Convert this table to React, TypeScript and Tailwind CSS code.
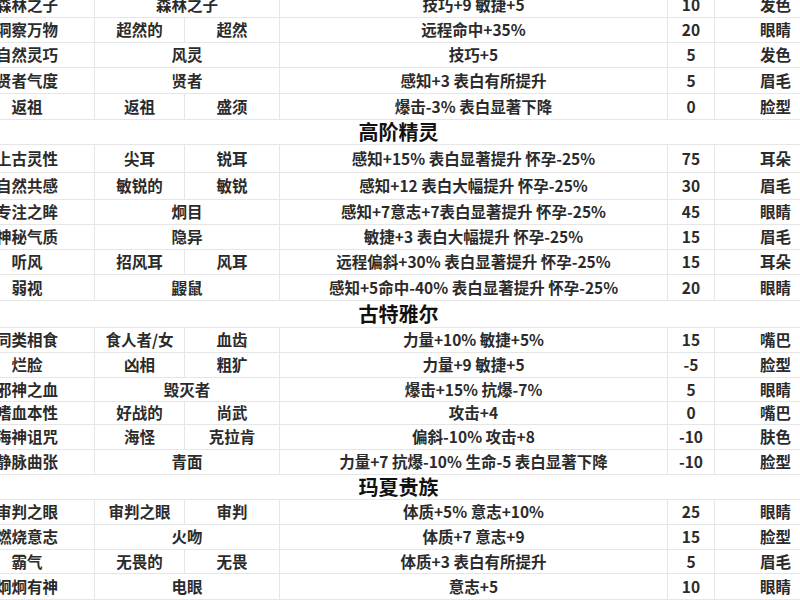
import React from 'react';

type Row =
  | { kind: 'header'; title: string; h: string }
  | { kind: 'data'; name: string; a: string; b?: string; effect: string; cost: string; part: string; h: string };

const rows: Row[] = [
  { kind: 'data', name: '森林之子', a: '森林之子', effect: '技巧+9 敏捷+5', cost: '10', part: '发色', h: 'h-[26px]' },
  { kind: 'data', name: '洞察万物', a: '超然的', b: '超然', effect: '远程命中+35%', cost: '20', part: '眼睛', h: 'h-[25px]' },
  { kind: 'data', name: '自然灵巧', a: '风灵', effect: '技巧+5', cost: '5', part: '发色', h: 'h-[25px]' },
  { kind: 'data', name: '贤者气度', a: '贤者', effect: '感知+3 表白有所提升', cost: '5', part: '眉毛', h: 'h-[26px]' },
  { kind: 'data', name: '返祖', a: '返祖', b: '盛须', effect: '爆击-3% 表白显著下降', cost: '0', part: '脸型', h: 'h-[26px]' },
  { kind: 'header', title: '高阶精灵', h: 'h-[25px]' },
  { kind: 'data', name: '上古灵性', a: '尖耳', b: '锐耳', effect: '感知+15% 表白显著提升 怀孕-25%', cost: '75', part: '耳朵', h: 'h-[28px]' },
  { kind: 'data', name: '自然共感', a: '敏锐的', b: '敏锐', effect: '感知+12 表白大幅提升 怀孕-25%', cost: '30', part: '眉毛', h: 'h-[27px]' },
  { kind: 'data', name: '专注之眸', a: '炯目', effect: '感知+7意志+7表白显著提升 怀孕-25%', cost: '45', part: '眼睛', h: 'h-[25px]' },
  { kind: 'data', name: '神秘气质', a: '隐异', effect: '敏捷+3 表白大幅提升 怀孕-25%', cost: '15', part: '眉毛', h: 'h-[25px]' },
  { kind: 'data', name: '听风', a: '招风耳', b: '风耳', effect: '远程偏斜+30% 表白显著提升 怀孕-25%', cost: '15', part: '耳朵', h: 'h-[25px]' },
  { kind: 'data', name: '弱视', a: '鼹鼠', effect: '感知+5命中-40% 表白显著提升 怀孕-25%', cost: '20', part: '眼睛', h: 'h-[26px]' },
  { kind: 'header', title: '古特雅尔', h: 'h-[27px]' },
  { kind: 'data', name: '同类相食', a: '食人者/女', b: '血齿', effect: '力量+10% 敏捷+5%', cost: '15', part: '嘴巴', h: 'h-[25px]' },
  { kind: 'data', name: '烂脸', a: '凶相', b: '粗犷', effect: '力量+9 敏捷+5', cost: '-5', part: '脸型', h: 'h-[25px]' },
  { kind: 'data', name: '邪神之血', a: '毁灭者', effect: '爆击+15% 抗爆-7%', cost: '5', part: '眼睛', h: 'h-[24px]' },
  { kind: 'data', name: '嗜血本性', a: '好战的', b: '尚武', effect: '攻击+4', cost: '0', part: '嘴巴', h: 'h-[23px]' },
  { kind: 'data', name: '海神诅咒', a: '海怪', b: '克拉肯', effect: '偏斜-10% 攻击+8', cost: '-10', part: '肤色', h: 'h-[25px]' },
  { kind: 'data', name: '静脉曲张', a: '青面', effect: '力量+7 抗爆-10% 生命-5 表白显著下降', cost: '-10', part: '脸型', h: 'h-[25px]' },
  { kind: 'header', title: '玛夏贵族', h: 'h-[25px]' },
  { kind: 'data', name: '审判之眼', a: '审判之眼', b: '审判', effect: '体质+5% 意志+10%', cost: '25', part: '眼睛', h: 'h-[25px]' },
  { kind: 'data', name: '燃烧意志', a: '火吻', effect: '体质+7 意志+9', cost: '15', part: '脸型', h: 'h-[25px]' },
  { kind: 'data', name: '霸气', a: '无畏的', b: '无畏', effect: '体质+3 表白有所提升', cost: '5', part: '眉毛', h: 'h-[24px]' },
  { kind: 'data', name: '炯炯有神', a: '电眼', effect: '意志+5', cost: '10', part: '眼睛', h: 'h-[26px]' },
];

const cell = 'flex items-center justify-center border-b border-r border-[#e6e6e6] whitespace-nowrap';

export default function App() {
  return (
    <div className="w-[800px] h-[600px] overflow-hidden bg-white text-[#2b2b2b] font-['Noto_Sans_CJK_SC','Noto_Sans',sans-serif]">
      <div className="-mt-[8px] -ml-[40px] w-[877px] grid grid-cols-[135px_90px_95px_388px_47px_122px] text-[15.5px] font-bold">
        {rows.map((r, i) =>
          r.kind === 'header' ? (
            <div
              key={i}
              className={`${r.h} col-span-6 flex items-center justify-center border-b border-[#e6e6e6] text-[20px] font-bold text-[#111]`}
            >
              {r.title}
            </div>
          ) : (
            <React.Fragment key={i}>
              <div className={`${cell} ${r.h}`}>{r.name}</div>
              {r.b ? (
                <>
                  <div className={`${cell} ${r.h}`}>{r.a}</div>
                  <div className={`${cell} ${r.h}`}>{r.b}</div>
                </>
              ) : (
                <div className={`${cell} ${r.h} col-span-2`}>{r.a}</div>
              )}
              <div className={`${cell} ${r.h}`}>{r.effect}</div>
              <div className={`${cell} ${r.h}`}>{r.cost}</div>
              <div className={`${cell} ${r.h}`}>{r.part}</div>
            </React.Fragment>
          )
        )}
      </div>
    </div>
  );
}
